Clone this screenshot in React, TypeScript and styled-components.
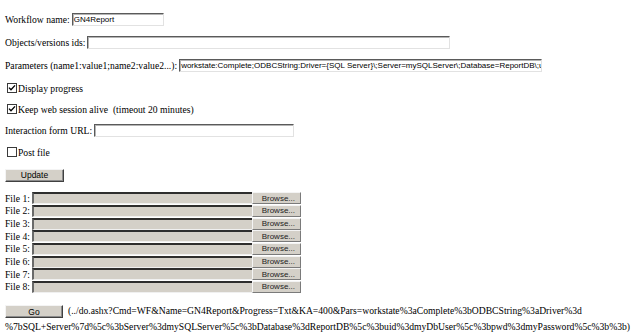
import React from "react";
import styled, { createGlobalStyle } from "styled-components";

const GlobalStyle = createGlobalStyle`
  html, body {
    margin: 0;
    padding: 0;
    background: #ffffff;
  }
  body {
    font-family: "Liberation Serif", "Times New Roman", serif;
    font-size: 9.65px;
    color: #000000;
  }
`;

const Page = styled.div`
  padding: 7px 0 0 5px;
  width: 627px;
`;

const Row = styled.div<{ $h: number }>`
  display: flex;
  align-items: center;
  height: ${(p) => p.$h}px;
  white-space: pre;
`;

const TextInput = styled.div<{ $w: number }>`
  box-sizing: border-box;
  width: ${(p) => p.$w}px;
  height: 13px;
  margin-left: 2px;
  background: #ffffff;
  border: 1px solid;
  border-color: #5a5a5a #e2e2e2 #e2e2e2 #5a5a5a;
  box-shadow: inset 1px 1px 0 #b4b4b4;
  font-family: "Liberation Sans", Arial, sans-serif;
  font-size: 8px;
  line-height: 11px;
  padding-left: 1px;
  overflow: hidden;
  white-space: nowrap;
`;

const CheckBox = styled.span`
  box-sizing: border-box;
  display: inline-flex;
  align-items: center;
  justify-content: center;
  width: 10px;
  height: 10px;
  margin-left: 2px;
  margin-right: 1px;
  border: 1px solid #3a3a3a;
  background: #ffffff;
`;

const Button = styled.div<{ $w: number }>`
  box-sizing: border-box;
  display: inline-flex;
  align-items: center;
  justify-content: center;
  width: ${(p) => p.$w}px;
  height: 13px;
  background: #d4d0c8;
  border: 1px solid;
  border-color: #f4f4f4 #404040 #404040 #f4f4f4;
  box-shadow: inset -1px -1px 0 #8c8c8c;
  font-family: "Liberation Sans", Arial, sans-serif;
  font-size: 8.5px;
  color: #000;
  vertical-align: middle;
`;

const Files = styled.div`
  margin-top: 5px;
`;

const FileRow = styled.div`
  display: flex;
  align-items: center;
  height: 12.67px;
`;

const FileLabel = styled.span`
  width: 27px;
`;

const FileBox = styled.div`
  box-sizing: border-box;
  width: 220px;
  height: 12px;
  background: #d4d0c8;
  border-top: 2px solid #2e2e2e;
  border-left: 2px solid #6a6a6a;
  border-bottom: 1px solid #f0f0f0;
`;

const BrowseButton = styled.div`
  box-sizing: border-box;
  width: 49px;
  height: 12px;
  display: flex;
  align-items: center;
  justify-content: flex-end;
  padding-right: 5px;
  background: #d4d0c8;
  border: 1px solid;
  border-color: #f4f4f4 #7a7a7a #7a7a7a #f4f4f4;
  font-family: "Liberation Sans", Arial, sans-serif;
  font-size: 8px;
  color: #222;
`;

const GoBlock = styled.div`
  margin-top: 9.7px;
  line-height: 16px;
  white-space: nowrap;
`;

const GoText = styled.span`
  margin-left: 5px;
`;

const Check = () => (
  <CheckBox>
    <svg width="8" height="8" viewBox="0 0 8 8">
      <path d="M1 3.6 L3 5.8 L7 1.4" fill="none" stroke="#000" strokeWidth="1.4" />
    </svg>
  </CheckBox>
);

const files = [1, 2, 3, 4, 5, 6, 7, 8];

export default function App() {
  return (
    <>
      <GlobalStyle />
      <Page>
        <Row $h={24}>
          Workflow name:<TextInput $w={92}>GN4Report</TextInput>
        </Row>
        <Row $h={23}>
          Objects/versions ids:<TextInput $w={363} />
        </Row>
        <Row $h={23}>
          Parameters (name1:value1;name2:value2...):
          <TextInput $w={363}>
            workstate:Complete;ODBCString:Driver={"{SQL Server}"}\;Server=mySQLServer\;Database=ReportDB\;uid=myDbUser\;pwd=myPassword\;;
          </TextInput>
        </Row>
        <Row $h={22}>
          <Check />
          Display progress
        </Row>
        <Row $h={20}>
          <Check />
          Keep web session alive  (timeout 20 minutes)
        </Row>
        <Row $h={22}>
          Interaction form URL:<TextInput $w={200} />
        </Row>
        <Row $h={22}>
          <CheckBox />
          Post file
        </Row>
        <Row $h={24}>
          <Button $w={59}>Update</Button>
        </Row>
        <Files>
          {files.map((n) => (
            <FileRow key={n}>
              <FileLabel>File {n}:</FileLabel>
              <FileBox />
              <BrowseButton>Browse...</BrowseButton>
            </FileRow>
          ))}
        </Files>
        <GoBlock>
          <Button $w={58}>Go</Button>
          <GoText>
            (../do.ashx?Cmd=WF&amp;Name=GN4Report&amp;Progress=Txt&amp;KA=400&amp;Pars=workstate%3aComplete%3bODBCString%3aDriver%3d
          </GoText>
          <br />
          %7bSQL+Server%7d%5c%3bServer%3dmySQLServer%5c%3bDatabase%3dReportDB%5c%3buid%3dmyDbUser%5c%3bpwd%3dmyPassword%5c%3b%3b)
        </GoBlock>
      </Page>
    </>
  );
}
